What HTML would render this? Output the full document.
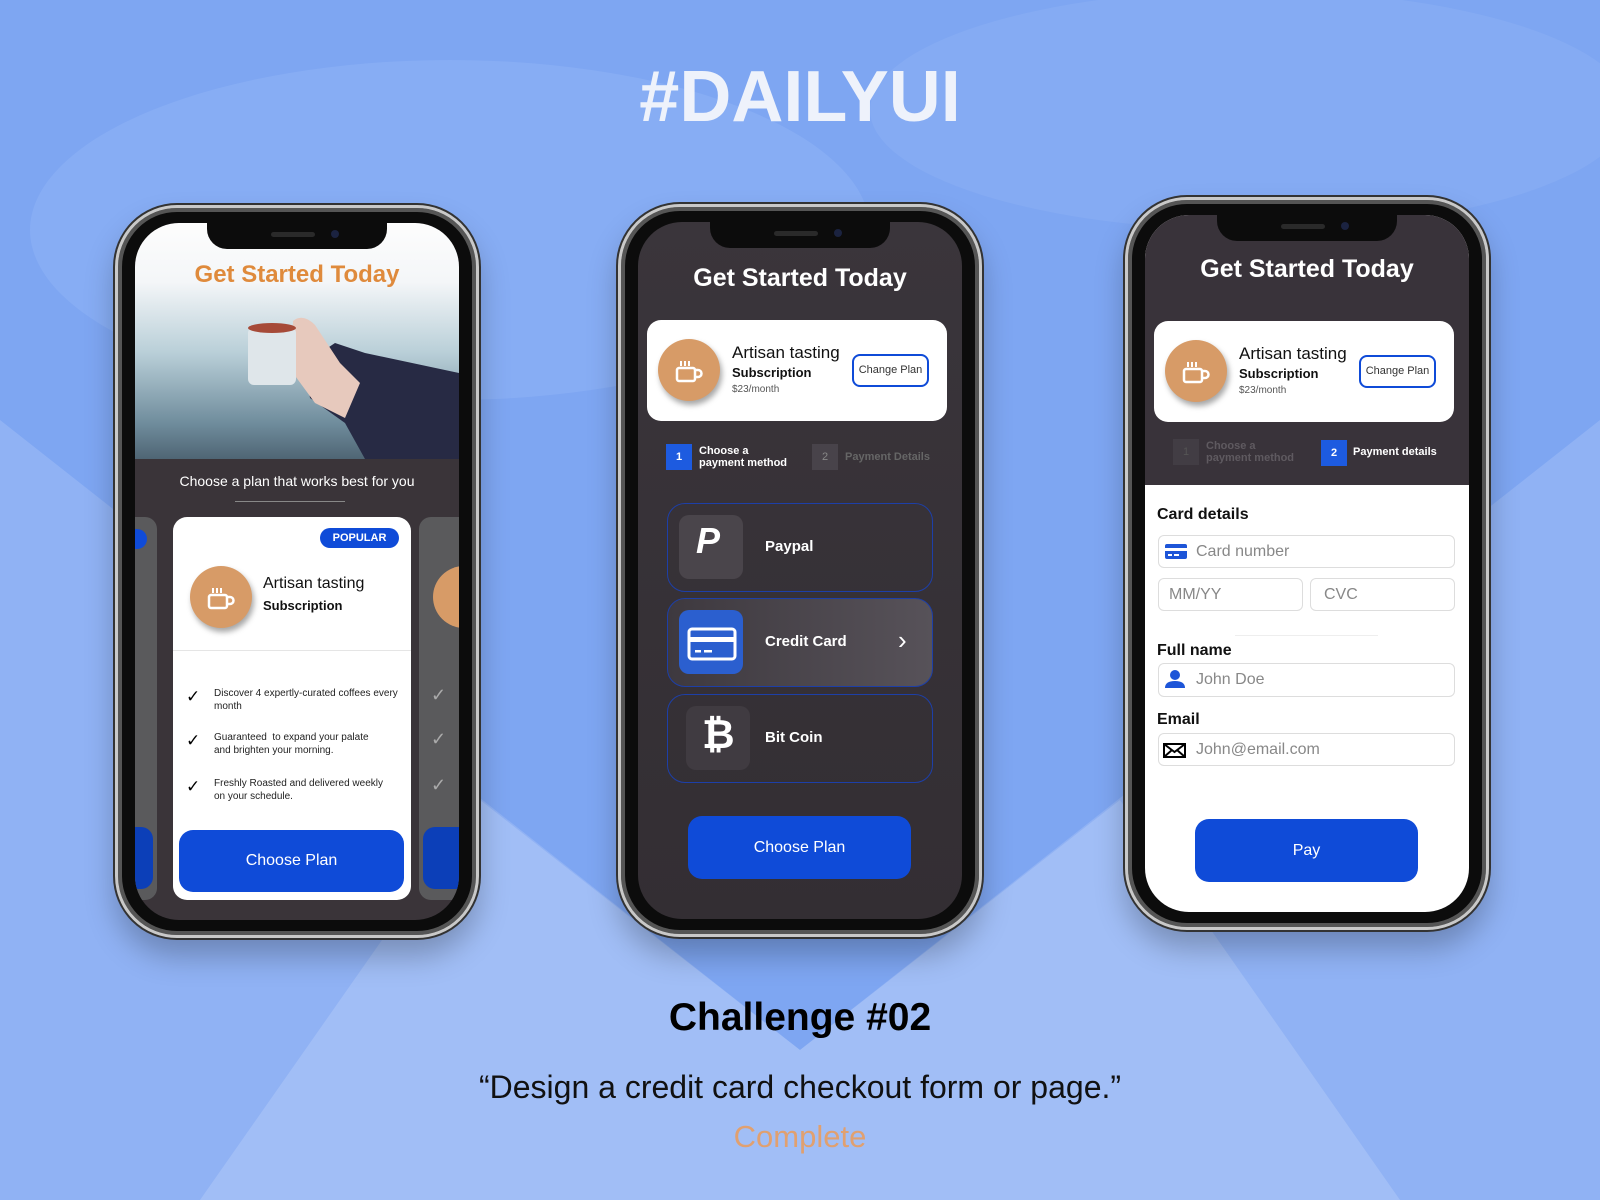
<!DOCTYPE html>
<html><head><meta charset="utf-8"><style>
*{box-sizing:border-box;margin:0;padding:0}
body{width:1600px;height:1200px;position:relative;overflow:hidden;font-family:"Liberation Sans",sans-serif;background:#80a8f3}
.abs{position:absolute}
.phone{position:absolute;width:364px;height:733px;border-radius:62px;background:#0c0c0c;border:3px solid #c9c9c9;box-shadow:0 0 0 2px #333,inset 0 0 0 4px #555,0 18px 30px rgba(0,0,0,.25)}
.screen{position:absolute;left:17px;top:15px;width:324px;height:697px;border-radius:44px;overflow:hidden;background:#39333a}
.notch{position:absolute;left:72px;top:0;width:180px;height:26px;background:#0c0c0c;border-radius:0 0 20px 20px;z-index:5}
.notch:before{content:"";position:absolute;left:64px;top:9px;width:44px;height:5px;border-radius:3px;background:#2a2a2a}
.notch:after{content:"";position:absolute;left:124px;top:7px;width:8px;height:8px;border-radius:50%;background:#1b2340}
.t{position:absolute;white-space:nowrap}
.h1{font-weight:bold;font-size:25px;color:#fff;width:100%;text-align:center}
.card{position:absolute;background:#fff;border-radius:14px}
.circ{position:absolute;border-radius:50%;background:#d79b67;box-shadow:2px 4px 6px rgba(0,0,0,.35)}
.circ svg{position:absolute;left:17px;top:19px}
.btn{position:absolute;background:#0f4bd8;border-radius:14px;color:#fff;font-size:16px;display:flex;align-items:center;justify-content:center}
.opt{position:absolute;left:29px;width:266px;height:89px;border:1px solid #1d3fa8;border-radius:18px}
.ib{position:absolute;left:11px;top:11px;width:64px;height:64px;border-radius:10px;background:#4a454b}
.inp{position:absolute;border:1px solid #ddd;border-radius:6px;background:#fff;color:#888;font-size:16px;display:flex;align-items:center}
.lbl{position:absolute;font-size:16px;font-weight:bold;color:#111}
</style></head><body>
<svg class="abs" style="left:0;top:0" width="1600" height="1200">
<rect width="1600" height="1200" fill="#7ea6f2"/>
<ellipse cx="450" cy="230" rx="420" ry="170" fill="#9dbcf8" opacity=".3"/>
<ellipse cx="1250" cy="110" rx="380" ry="120" fill="#9dbcf8" opacity=".25"/>
<polygon points="0,420 800,1050 800,1200 0,1200" fill="#98b8f5" opacity=".7"/>
<polygon points="1600,420 800,1050 800,1200 1600,1200" fill="#98b8f5" opacity=".7"/>
<polygon points="480,800 800,1050 1120,800 1400,1200 200,1200" fill="#adc7f6" opacity=".6"/>
</svg>
<div class="t" style="left:0;width:1600px;text-align:center;top:56px;font-size:72px;font-weight:bold;color:#eef2fb">#DAILYUI</div>

<!-- LEFT PHONE -->
<div class="phone" style="left:115px;top:205px"><div class="screen" style="background:#3a3439">
<div class="notch"></div>
<div class="abs" style="left:0;top:0;width:324px;height:236px;background:linear-gradient(#fdfdfd 0,#f4f6f8 25%,#b9cfd8 55%,#6f8c9c 85%,#4f6574 100%)"></div>
<svg class="abs" style="left:0;top:60px" width="324" height="176">
<path d="M170 80 L200 60 L230 70 L324 90 L324 176 L230 176 L210 140 L175 115 Z" fill="#272a44"/>
<path d="M158 38 Q168 30 180 42 L205 80 L225 100 L210 135 L180 120 L158 90 Z" fill="#e7c9bd"/>
<rect x="113" y="44" width="48" height="58" rx="6" fill="#dfe6ea"/>
<ellipse cx="137" cy="45" rx="24" ry="5" fill="#a64a38"/>
</svg>
<div class="t h1" style="top:38px;color:#df8a3c;font-size:24px">Get Started Today</div>
<div class="t" style="left:0;width:100%;text-align:center;top:250px;font-size:14px;color:#fff">Choose a plan that works best for you</div>
<div class="abs" style="left:100px;top:278px;width:110px;height:1px;background:#888"></div>
<div class="abs" style="left:-20px;top:294px;width:42px;height:383px;background:#5a5a5c;border-radius:12px"></div>
<div class="abs" style="left:-20px;top:306px;width:32px;height:20px;background:#0f4bd8;border-radius:10px"></div>
<div class="abs" style="left:-20px;top:604px;width:38px;height:62px;background:#0c3fb8;border-radius:12px"></div>
<div class="abs" style="left:284px;top:294px;width:60px;height:383px;background:#5a5a5c;border-radius:12px"></div>
<div class="abs" style="left:298px;top:343px;width:62px;height:62px;background:#d79b67;border-radius:50%"></div>
<div class="abs" style="left:288px;top:604px;width:50px;height:62px;background:#0c3fb8;border-radius:12px"></div>
<div class="t" style="left:296px;top:462px;color:#aaa;font-size:18px">✓</div>
<div class="t" style="left:296px;top:506px;color:#aaa;font-size:18px">✓</div>
<div class="t" style="left:296px;top:552px;color:#aaa;font-size:18px">✓</div>
<div class="card" style="left:38px;top:294px;width:238px;height:383px">
<div class="abs" style="left:147px;top:11px;width:79px;height:20px;background:#0f4bd8;border-radius:10px;color:#fff;font-size:11px;font-weight:bold;text-align:center;line-height:20px">POPULAR</div>
<div class="circ" style="left:17px;top:49px;width:62px;height:62px"><svg width="30" height="26"><path d="M6 3v5M10 3v5M14 3v5" stroke="#fff" stroke-width="2"/><rect x="2" y="10" width="18" height="13" rx="2" fill="none" stroke="#fff" stroke-width="2.5"/><path d="M20 12h3a3.5 3.5 0 010 7h-3" fill="none" stroke="#fff" stroke-width="2.5"/></svg></div>
<div class="t" style="left:90px;top:58px;font-size:16px;color:#111">Artisan tasting</div>
<div class="t" style="left:90px;top:81px;font-size:13px;font-weight:bold;color:#111">Subscription</div>
<div class="abs" style="left:0;top:133px;width:238px;height:1px;background:#e5e5e5"></div>
<div class="t" style="left:13px;top:170px;font-size:17px">✓</div>
<div class="t" style="left:41px;top:170px;font-size:10px;line-height:13px;color:#222">Discover 4 expertly-curated coffees every<br>month</div>
<div class="t" style="left:13px;top:214px;font-size:17px">✓</div>
<div class="t" style="left:41px;top:214px;font-size:10px;line-height:13px;color:#222">Guaranteed&nbsp; to expand your palate<br>and brighten your morning.</div>
<div class="t" style="left:13px;top:260px;font-size:17px">✓</div>
<div class="t" style="left:41px;top:260px;font-size:10px;line-height:13px;color:#222">Freshly Roasted and delivered weekly<br>on your schedule.</div>
<div class="btn" style="left:6px;top:313px;width:225px;height:62px">Choose Plan</div>
</div>
</div></div>

<!-- MIDDLE PHONE -->
<div class="phone" style="left:618px;top:204px"><div class="screen" style="background:linear-gradient(#3a353b,#332e33)">
<div class="notch"></div>
<div class="t h1" style="top:42px">Get Started Today</div>
<div class="card" style="left:9px;top:98px;width:300px;height:101px">
<div class="circ" style="left:11px;top:19px;width:62px;height:62px"><svg width="30" height="26"><path d="M6 3v5M10 3v5M14 3v5" stroke="#fff" stroke-width="2"/><rect x="2" y="10" width="18" height="13" rx="2" fill="none" stroke="#fff" stroke-width="2.5"/><path d="M20 12h3a3.5 3.5 0 010 7h-3" fill="none" stroke="#fff" stroke-width="2.5"/></svg></div>
<div class="t" style="left:85px;top:23px;font-size:17px;color:#111">Artisan tasting</div>
<div class="t" style="left:85px;top:45px;font-size:13px;font-weight:bold;color:#111">Subscription</div>
<div class="t" style="left:85px;top:64px;font-size:10px;color:#555">$23/month</div>
<div class="abs" style="left:205px;top:34px;width:77px;height:33px;border:2px solid #0f4bd8;border-radius:8px;font-size:11px;color:#333;text-align:center;line-height:29px">Change Plan</div>
</div>
<div class="abs" style="left:28px;top:222px;width:26px;height:26px;background:#1d5be0;color:#fff;font-size:11px;font-weight:bold;text-align:center;line-height:26px">1</div>
<div class="t" style="left:61px;top:223px;font-size:11px;line-height:12px;font-weight:bold;color:#fff">Choose a<br>payment method</div>
<div class="abs" style="left:174px;top:222px;width:26px;height:26px;background:#48434a;color:#888;font-size:11px;text-align:center;line-height:26px">2</div>
<div class="t" style="left:207px;top:229px;font-size:11px;font-weight:bold;color:#666">Payment Details</div>
<div class="opt" style="top:281px"><div class="ib"></div><div class="t" style="left:28px;top:16px;font-size:36px;font-weight:bold;font-style:italic;color:#fff">P</div><div class="t" style="left:97px;top:34px;font-size:15px;font-weight:bold;color:#fff">Paypal</div></div>
<div class="opt" style="top:376px;background:linear-gradient(90deg,#3e393f,#575259)"><div class="ib" style="background:#2b5fcf"></div>
<svg class="abs" style="left:19px;top:28px" width="50" height="34"><rect x="2" y="2" width="46" height="30" rx="3" fill="none" stroke="#fff" stroke-width="3"/><rect x="2" y="10" width="46" height="5" fill="#fff"/><rect x="8" y="23" width="6" height="2.5" fill="#fff"/><rect x="17" y="23" width="8" height="2.5" fill="#fff"/></svg>
<div class="t" style="left:97px;top:34px;font-size:15px;font-weight:bold;color:#fff">Credit Card</div><div class="t" style="left:230px;top:26px;font-size:26px;color:#fff">›</div></div>
<div class="opt" style="top:472px"><div class="ib" style="left:18px;background:#403b41"></div><div class="t" style="left:34px;top:18px;font-size:40px;font-weight:bold;color:#fff">₿</div><div class="t" style="left:97px;top:34px;font-size:15px;font-weight:bold;color:#fff">Bit Coin</div></div>
<div class="btn" style="left:50px;top:594px;width:223px;height:63px">Choose Plan</div>
</div></div>

<!-- RIGHT PHONE -->
<div class="phone" style="left:1125px;top:197px"><div class="screen" style="background:#fff">
<div class="notch"></div>
<div class="abs" style="left:0;top:0;width:324px;height:270px;background:#39333a"></div>
<div class="t h1" style="top:40px">Get Started Today</div>
<div class="card" style="left:9px;top:106px;width:300px;height:101px">
<div class="circ" style="left:11px;top:19px;width:62px;height:62px"><svg width="30" height="26"><path d="M6 3v5M10 3v5M14 3v5" stroke="#fff" stroke-width="2"/><rect x="2" y="10" width="18" height="13" rx="2" fill="none" stroke="#fff" stroke-width="2.5"/><path d="M20 12h3a3.5 3.5 0 010 7h-3" fill="none" stroke="#fff" stroke-width="2.5"/></svg></div>
<div class="t" style="left:85px;top:23px;font-size:17px;color:#111">Artisan tasting</div>
<div class="t" style="left:85px;top:45px;font-size:13px;font-weight:bold;color:#111">Subscription</div>
<div class="t" style="left:85px;top:64px;font-size:10px;color:#555">$23/month</div>
<div class="abs" style="left:205px;top:34px;width:77px;height:33px;border:2px solid #0f4bd8;border-radius:8px;font-size:11px;color:#333;text-align:center;line-height:29px">Change Plan</div>
</div>
<div class="abs" style="left:28px;top:224px;width:26px;height:26px;background:#423d44;color:#555;font-size:11px;text-align:center;line-height:26px">1</div>
<div class="t" style="left:61px;top:225px;font-size:11px;line-height:12px;font-weight:bold;color:#5f5a60">Choose a<br>payment method</div>
<div class="abs" style="left:176px;top:225px;width:26px;height:26px;background:#1d5be0;color:#fff;font-size:11px;font-weight:bold;text-align:center;line-height:26px">2</div>
<div class="t" style="left:208px;top:231px;font-size:11px;font-weight:bold;color:#fff">Payment details</div>
<div class="lbl" style="left:12px;top:291px">Card details</div>
<div class="inp" style="left:13px;top:320px;width:297px;height:33px;padding-left:37px">Card number</div>
<svg class="abs" style="left:20px;top:329px" width="22" height="15"><rect width="22" height="15" rx="2" fill="#1d55d8"/><rect y="4" width="22" height="3" fill="#fff"/><rect x="3" y="10" width="4" height="2" fill="#fff"/><rect x="9" y="10" width="5" height="2" fill="#fff"/></svg>
<div class="inp" style="left:13px;top:363px;width:145px;height:33px;padding-left:10px">MM/YY</div>
<div class="inp" style="left:165px;top:363px;width:145px;height:33px;padding-left:13px">CVC</div>
<div class="abs" style="left:90px;top:420px;width:143px;height:1px;background:#eee"></div>
<div class="lbl" style="left:12px;top:427px">Full name</div>
<div class="inp" style="left:13px;top:448px;width:297px;height:34px;padding-left:37px">John Doe</div>
<svg class="abs" style="left:20px;top:454px" width="20" height="20"><circle cx="10" cy="6" r="5" fill="#1d55d8"/><path d="M0 19 Q0 12 10 12 Q20 12 20 19Z" fill="#1d55d8"/></svg>
<div class="lbl" style="left:12px;top:496px">Email</div>
<div class="inp" style="left:13px;top:518px;width:297px;height:33px;padding-left:37px">John@email.com</div>
<svg class="abs" style="left:18px;top:528px" width="23" height="15"><rect x="1" y="1" width="21" height="13" fill="#fff" stroke="#000" stroke-width="2"/><path d="M1 1 L11.5 9 L22 1 M1 14 L9 7 M22 14 L14 7" stroke="#000" stroke-width="2" fill="none"/></svg>
<div class="btn" style="left:50px;top:604px;width:223px;height:63px">Pay</div>
</div></div>

<div class="t" style="left:0;width:1600px;text-align:center;top:996px;font-size:39px;font-weight:bold;color:#000">Challenge #02</div>
<div class="t" style="left:0;width:1600px;text-align:center;top:1069px;font-size:32px;color:#111">“Design a credit card checkout form or page.”</div>
<div class="t" style="left:0;width:1600px;text-align:center;top:1119px;font-size:31px;color:#e0a070">Complete</div>
</body></html>
